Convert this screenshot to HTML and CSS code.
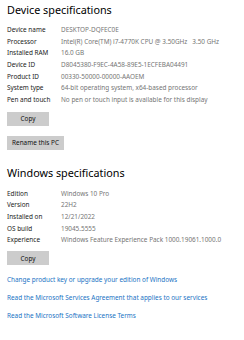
FILE: index.html
```html
<!DOCTYPE html>
<html lang="en">
<head>
  <meta charset="UTF-8" />
  <title>About</title>
  <link rel="stylesheet" href="styles.css">
</head>
<body>
  <div class="page">
    <h2 class="section-title">Device specifications</h2>
    <div class="spec-list">
      <div class="spec-row"><span class="spec-label">Device name</span><span class="spec-value">DESKTOP-DQFEC0E</span></div>
      <div class="spec-row"><span class="spec-label">Processor</span><span class="spec-value">Intel(R) Core(TM) i7-4770K CPU @ 3.50GHz&nbsp;&nbsp;&nbsp;3.50 GHz</span></div>
      <div class="spec-row"><span class="spec-label">Installed RAM</span><span class="spec-value">16.0 GB</span></div>
      <div class="spec-row"><span class="spec-label">Device ID</span><span class="spec-value">D8045380-F9EC-4A58-89E5-1ECFEBA04491</span></div>
      <div class="spec-row"><span class="spec-label">Product ID</span><span class="spec-value">00330-50000-00000-AAOEM</span></div>
      <div class="spec-row"><span class="spec-label">System type</span><span class="spec-value">64-bit operating system, x64-based processor</span></div>
      <div class="spec-row"><span class="spec-label">Pen and touch</span><span class="spec-value">No pen or touch input is available for this display</span></div>
    </div>
    <button class="btn btn-copy">Copy</button>
    <button class="btn btn-rename">Rename this PC</button>

    <h2 class="section-title section-title-second">Windows specifications</h2>
    <div class="spec-list">
      <div class="spec-row"><span class="spec-label">Edition</span><span class="spec-value">Windows 10 Pro</span></div>
      <div class="spec-row"><span class="spec-label">Version</span><span class="spec-value">22H2</span></div>
      <div class="spec-row"><span class="spec-label">Installed on</span><span class="spec-value">12/21/2022</span></div>
      <div class="spec-row"><span class="spec-label">OS build</span><span class="spec-value">19045.5555</span></div>
      <div class="spec-row"><span class="spec-label">Experience</span><span class="spec-value">Windows Feature Experience Pack 1000.19061.1000.0</span></div>
    </div>
    <button class="btn btn-copy btn-copy-second">Copy</button>

    <div class="links">
      <a class="link" href="#">Change product key or upgrade your edition of Windows</a>
      <a class="link" href="#">Read the Microsoft Services Agreement that applies to our services</a>
      <a class="link" href="#">Read the Microsoft Software License Terms</a>
    </div>
  </div>
</body>
</html>
```

FILE: styles.css
```css
body {
  margin: 0;
  padding: 0;
  background: #fff;
  font-family: 'Noto Sans', 'Open Sans', sans-serif;
  color: #000;
}
.page {
  padding: 2px 7px 0 7px;
  display: flex;
  flex-direction: column;
  align-items: flex-start;
}
.section-title {
  font-size: 10.8px;
  font-weight: 400;
  margin: 0 0 7px 0;
  line-height: 15px;
}
.section-title-second {
  margin-top: 15px;
  margin-bottom: 8px;
}
.spec-list {
  display: flex;
  flex-direction: column;
}
.spec-row {
  display: flex;
  font-size: 6.4px;
  line-height: 11.67px;
  white-space: nowrap;
}
.spec-label {
  width: 54px;
  flex-shrink: 0;
  color: #1a1a1a;
}
.spec-value {
  color: #757575;
}
.btn {
  font-family: inherit;
  font-size: 6.4px;
  color: #111;
  background: #cccccc;
  border: none;
  padding: 0;
  height: 14px;
  margin-top: 6px;
}
.btn-copy {
  width: 42px;
}
.btn-rename {
  width: 57px;
  margin-top: 10px;
}
.btn-copy-second {
  margin-top: 5px;
}
.links {
  display: flex;
  flex-direction: column;
  margin-top: 9px;
  gap: 7px;
}
.link {
  font-size: 6.4px;
  line-height: 11px;
  color: #1a73c4;
  text-decoration: none;
}
```
